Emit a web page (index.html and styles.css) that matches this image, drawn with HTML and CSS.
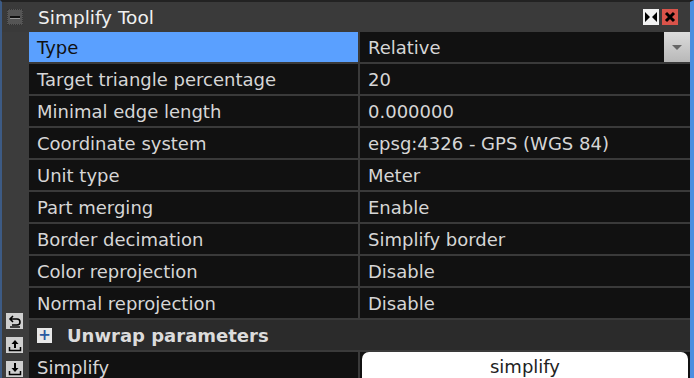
FILE: index.html
```html
<!DOCTYPE html>
<html lang="en">
<head>
  <meta charset="UTF-8">
  <title>Simplify Tool</title>
  <link rel="stylesheet" href="styles.css">
</head>
<body>
  <div class="window">
    <div class="titlebar">
      <div class="collapse"><span></span></div>
      <div class="title">Simplify Tool</div>
      <div class="tbtn dock">
        <svg width="16" height="16" viewBox="0 0 16 16"><path d="M2 3 L7 8 L2 13 Z M14 3 L9 8 L14 13 Z" fill="#000"/></svg>
      </div>
      <div class="tbtn close">
        <svg width="16" height="16" viewBox="0 0 16 16"><path d="M4 4 L12 12 M12 4 L4 12" stroke="#000" stroke-width="3"/></svg>
      </div>
    </div>
    <div class="main">
      <div class="sidebar">
        <div class="side-icons">
          <div class="sbtn">
            <svg width="14" height="14" viewBox="0 0 14 14"><path d="M5 2 L2 5 L5 8 M2 5 H9 A3 3 0 0 1 9 11 H4" fill="none" stroke="#000" stroke-width="1.6"/><path d="M2 13 H12" stroke="#000" stroke-width="1.4"/></svg>
          </div>
          <div class="sbtn">
            <svg width="14" height="14" viewBox="0 0 14 14"><path d="M7 2 L3.5 6 H10.5 Z" fill="#000"/><path d="M7 5 V10" stroke="#000" stroke-width="2"/><path d="M1.5 9 V12.5 H12.5 V9" fill="none" stroke="#000" stroke-width="1.5"/></svg>
          </div>
          <div class="sbtn">
            <svg width="14" height="14" viewBox="0 0 14 14"><path d="M7 10 L3.5 6 H10.5 Z" fill="#000"/><path d="M7 1 V7" stroke="#000" stroke-width="2"/><path d="M1.5 9 V12.5 H12.5 V9" fill="none" stroke="#000" stroke-width="1.5"/></svg>
          </div>
        </div>
      </div>
      <div class="props">
        <div class="row selected">
          <div class="cell label">Type</div>
          <div class="cell value combo">Relative<span class="arrow"></span></div>
        </div>
        <div class="row">
          <div class="cell label">Target triangle percentage</div>
          <div class="cell value">20</div>
        </div>
        <div class="row">
          <div class="cell label">Minimal edge length</div>
          <div class="cell value">0.000000</div>
        </div>
        <div class="row">
          <div class="cell label">Coordinate system</div>
          <div class="cell value">epsg:4326 - GPS (WGS 84)</div>
        </div>
        <div class="row">
          <div class="cell label">Unit type</div>
          <div class="cell value">Meter</div>
        </div>
        <div class="row">
          <div class="cell label">Part merging</div>
          <div class="cell value">Enable</div>
        </div>
        <div class="row">
          <div class="cell label">Border decimation</div>
          <div class="cell value">Simplify border</div>
        </div>
        <div class="row">
          <div class="cell label">Color reprojection</div>
          <div class="cell value">Disable</div>
        </div>
        <div class="row">
          <div class="cell label">Normal reprojection</div>
          <div class="cell value">Disable</div>
        </div>
        <div class="group">
          <div class="expand">+</div>
          <span>Unwrap parameters</span>
        </div>
        <div class="row">
          <div class="cell label">Simplify</div>
          <div class="cell value btncell"><div class="action">simplify</div></div>
        </div>
      </div>
    </div>
  </div>
</body>
</html>
```

FILE: styles.css
```css
html, body {
  margin: 0;
  padding: 0;
  background: #3c3c3c;
  font-family: "DejaVu Sans", "Open Sans", sans-serif;
  font-size: 18px;
  overflow: hidden;
}

.window {
  width: 694px;
  height: 378px;
  box-sizing: border-box;
  border-top: 2px solid #222;
  border-left: 2px solid #3d5b85;
  border-right: 4px solid #4a8ee0;
  background: #3c3c3c;
  overflow: hidden;
}

.titlebar {
  height: 30px;
  display: flex;
  align-items: center;
  background: #3a3a3a;
}

.collapse {
  width: 16px;
  height: 16px;
  margin-left: 5px;
  background: #555;
  border: 1px dotted #333;
  box-sizing: border-box;
  display: flex;
  align-items: center;
  justify-content: center;
}

.collapse span {
  display: block;
  width: 10px;
  height: 2px;
  background: #111;
  box-shadow: 0 1px 0 #999;
}

.title {
  color: #f0f0f0;
  font-size: 18.5px;
  margin-left: 15px;
  flex: 1;
}

.tbtn {
  width: 16px;
  height: 16px;
  margin-right: 3px;
  display: flex;
  align-items: center;
  justify-content: center;
}

.dock {
  background: #f2f2f2;
}

.close {
  background: #d9534a;
  margin-right: 12px;
}

.main {
  display: flex;
}

.sidebar {
  width: 27px;
  height: 346px;
  position: relative;
}

.side-icons {
  position: absolute;
  left: 4px;
  top: 281px;
  display: flex;
  flex-direction: column;
  gap: 8px;
}

.sbtn {
  width: 17px;
  height: 16px;
  background: #cfcfcf;
  display: flex;
  align-items: center;
  justify-content: center;
}

.props {
  flex: 1;
  display: flex;
  flex-direction: column;
  gap: 2px;
  background: #3a3a3a;
}

.row {
  display: flex;
  gap: 2px;
  height: 30px;
}

.cell {
  background: #111;
  color: #d6d6d6;
  display: flex;
  align-items: center;
  padding-left: 8px;
  box-sizing: border-box;
}

.label {
  width: 329px;
}

.value {
  flex: 1;
  position: relative;
}

.selected .cell.label {
  background: #5aa0ff;
  color: #111;
}

.combo .arrow {
  position: absolute;
  right: 0;
  top: 0;
  width: 26px;
  height: 30px;
  background: linear-gradient(#dcdcdc, #b8b8b8);
}

.combo .arrow::after {
  content: "";
  position: absolute;
  left: 8px;
  top: 13px;
  border-left: 5px solid transparent;
  border-right: 5px solid transparent;
  border-top: 5px solid #666;
}

.group {
  height: 30px;
  background: #2b2b2b;
  display: flex;
  align-items: center;
  color: #dcdcdc;
  font-weight: bold;
  font-size: 18px;
}

.expand {
  width: 15px;
  height: 15px;
  margin-left: 8px;
  margin-right: 15px;
  background: #e8e8e8;
  color: #2a5aa0;
  font-size: 15px;
  line-height: 15px;
  text-align: center;
  font-weight: bold;
}

.btncell {
  padding: 0 2px 0 2px;
  align-items: flex-start;
}

.action {
  width: 100%;
  height: 32px;
  background: #fff;
  border-radius: 7px;
  color: #222;
  text-align: center;
  line-height: 30px;
}
```
